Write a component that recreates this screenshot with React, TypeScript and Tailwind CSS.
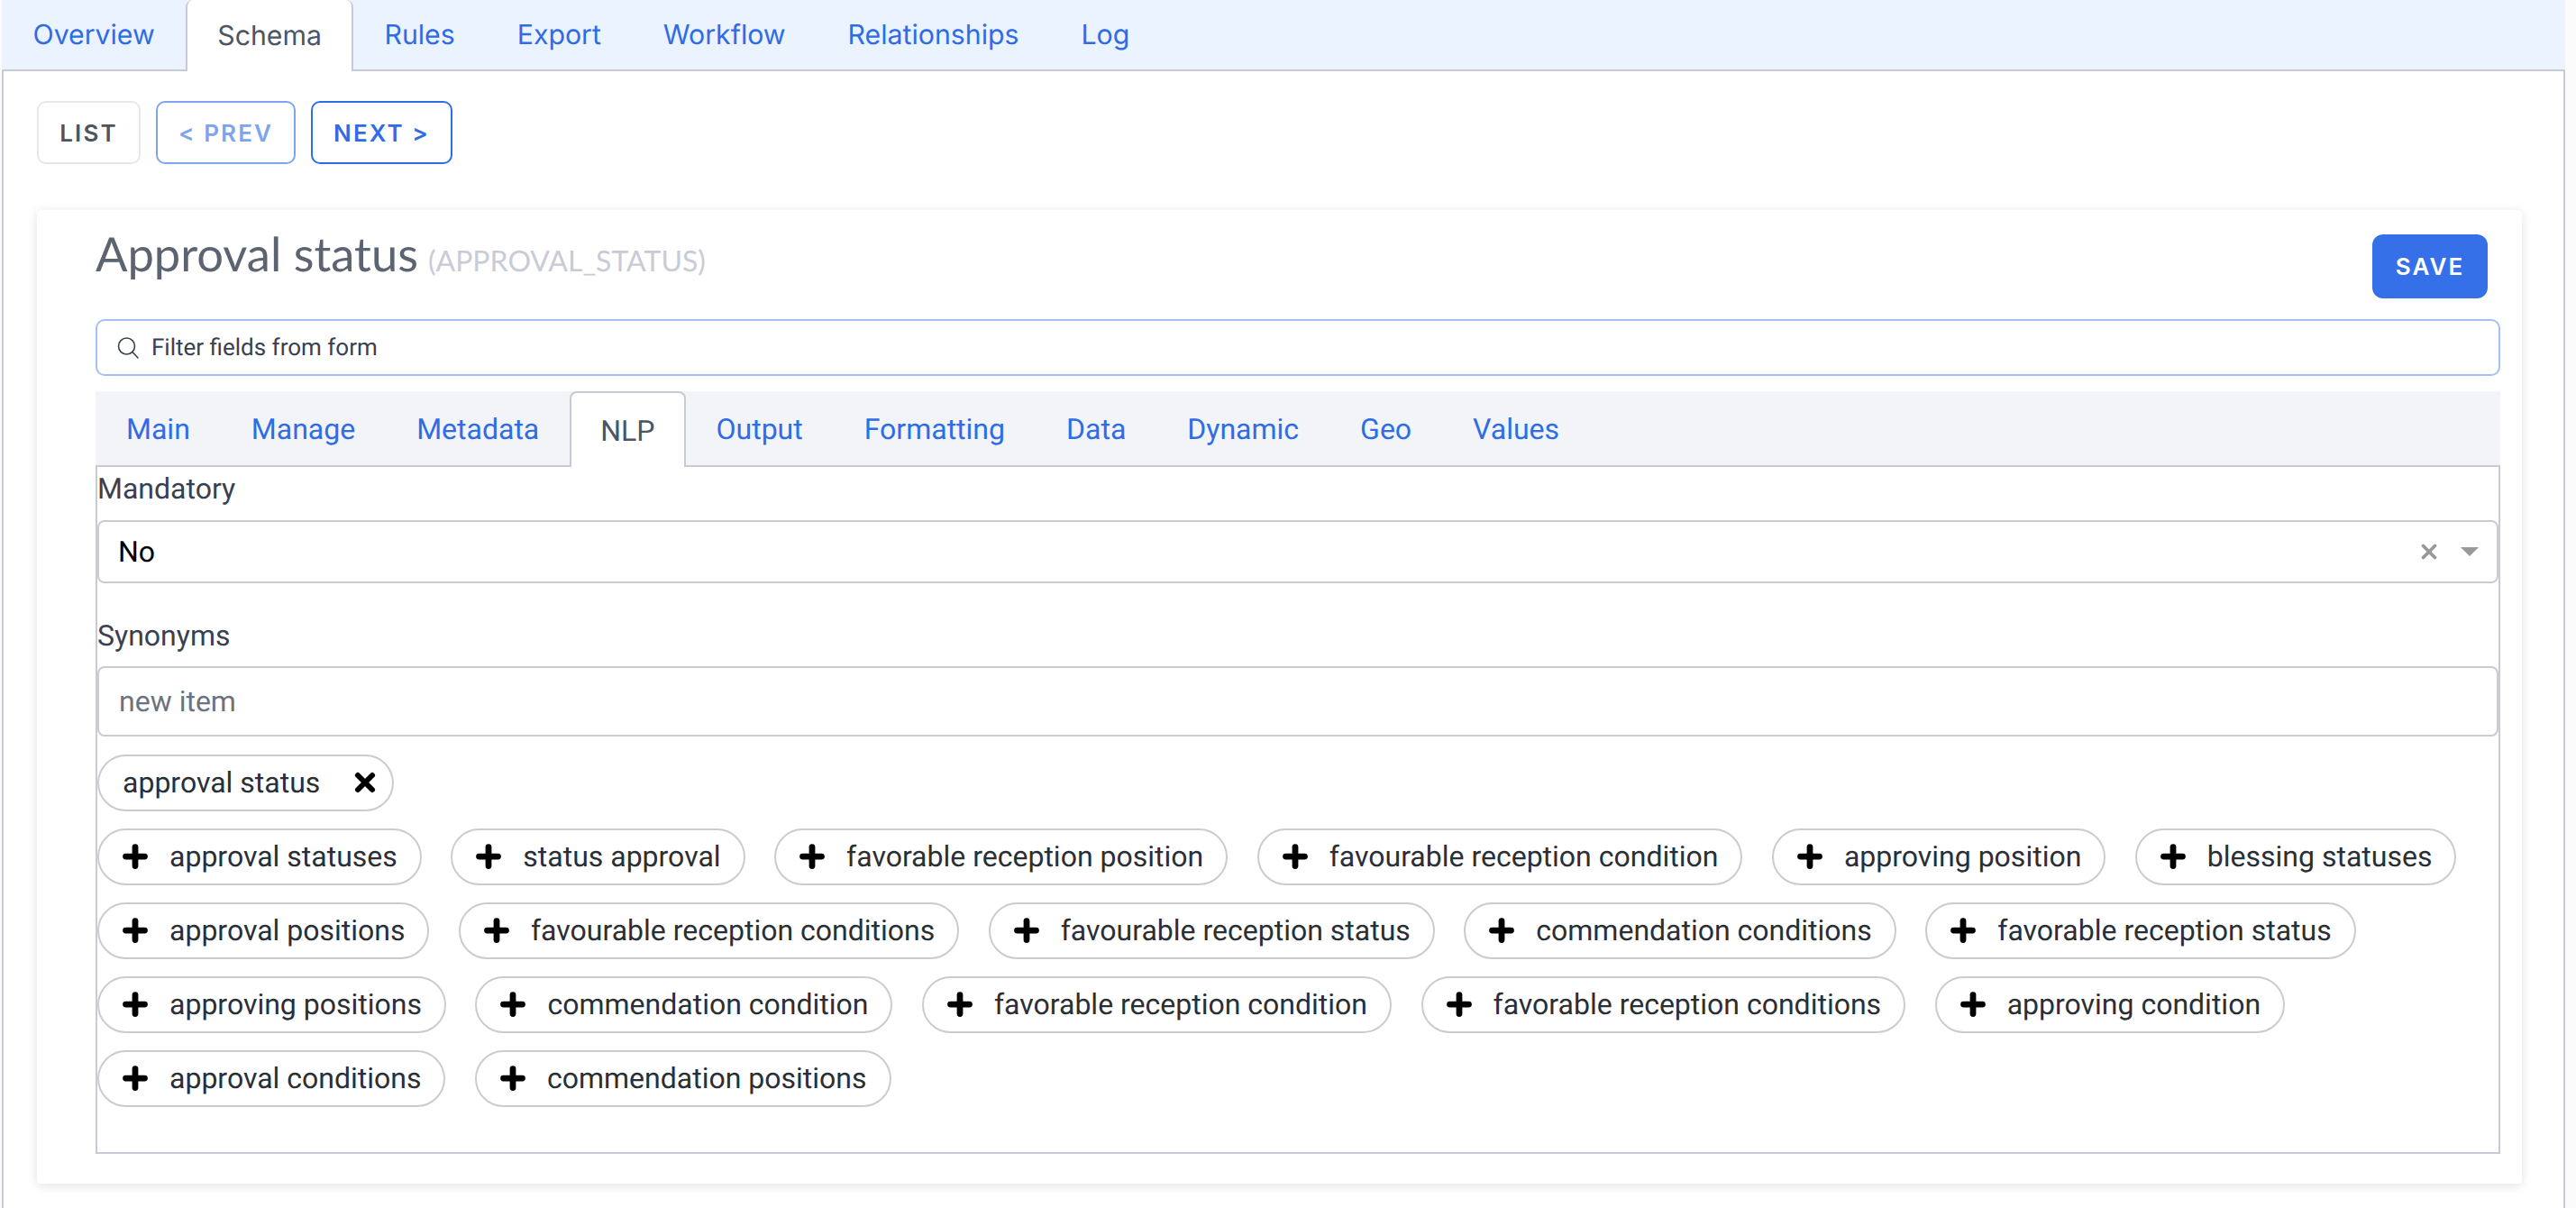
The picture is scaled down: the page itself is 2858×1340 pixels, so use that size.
import React from 'react';
import { Plus, X } from 'lucide-react';

const topTabs = ['Overview', 'Schema', 'Rules', 'Export', 'Workflow', 'Relationships', 'Log'];
const formTabs = ['Main', 'Manage', 'Metadata', 'NLP', 'Output', 'Formatting', 'Data', 'Dynamic', 'Geo', 'Values'];

const suggestions = [
  'approval statuses',
  'status approval',
  'favorable reception position',
  'favourable reception condition',
  'approving position',
  'blessing statuses',
  'approval positions',
  'favourable reception conditions',
  'favourable reception status',
  'commendation conditions',
  'favorable reception status',
  'approving positions',
  'commendation condition',
  'favorable reception condition',
  'favorable reception conditions',
  'approving condition',
  'approval conditions',
  'commendation positions',
];

const App: React.FC = () => {
  return (
    <div className="min-h-[1340px] bg-[#fbfbfb] pl-[2px]">
      <div className="w-[2844px] min-h-[1340px] border-x-2 border-[#c8cad6] bg-white font-['Roboto',sans-serif] [text-rendering:geometricPrecision]">
        {/* top tabs */}
        <div className="flex h-[79px] -mx-[2px] bg-[#ebf3fe] border-b-2 border-[#c8cad6] font-['Inter',sans-serif]">
          {topTabs.map((tab) =>
            tab === 'Schema' ? (
              <div key={tab} className="h-[79px] px-[33px] pt-[2px] bg-white border-x-2 border-[#c8cad6] rounded-t-lg flex items-center text-[30.25px] text-[#4b5563]">
                {tab}
              </div>
            ) : (
              <div key={tab} className="h-[77px] px-[34.5px] pt-[2px] flex items-center text-[30.25px] text-[#2f6ce5]">
                {tab}
              </div>
            )
          )}
        </div>

        <div className="pl-[37px] pt-[33px] flex gap-[17px] font-['Inter',sans-serif] font-semibold text-[26px] tracking-[0.08em]">
          <button className="w-[115px] h-[70px] rounded-[10px] border-2 border-[#e5e7eb] text-[#4b5563]">LIST</button>
          <button className="w-[155px] h-[70px] rounded-[10px] border-2 border-[#7fa4ef] text-[#7fa4ef]">&lt; PREV</button>
          <button className="w-[157px] h-[70px] rounded-[10px] border-2 border-[#2f6ce5] text-[#2f6ce5]">NEXT &gt;</button>
        </div>

        {/* card */}
        <div className="mt-[51px] ml-[37px] w-[2757px] h-[1080px] bg-white rounded-[4px] shadow-[0_2px_12px_rgba(0,0,0,0.12)] pl-[65px] pr-[24px]">
          <div className="flex justify-between h-[121px]">
            <div className="pt-[10px] flex items-baseline gap-[11px] font-['Lato',sans-serif] h-fit">
              <span className="text-[52.5px] text-[#5b6470]">Approval status</span>
              <span className="text-[32px] text-[#c9cbd6]">(APPROVAL_STATUS)</span>
            </div>
            <button className="mt-[27px] mr-[14px] w-[128px] h-[71px] rounded-[12px] bg-[#3570e8] text-white font-['Inter',sans-serif] font-semibold text-[26px] tracking-[0.08em]">SAVE</button>
          </div>

          <div className="h-[63px] border-2 border-[#a3c1f3] rounded-[10px] flex items-center pl-[22px] gap-[14px]">
            <svg width="24" height="24" viewBox="0 0 24 24" fill="none" stroke="#374151" strokeWidth="1.6" strokeLinecap="round">
              <circle cx="10.5" cy="10" r="9" />
              <line x1="17" y1="16.5" x2="23" y2="23" />
            </svg>
            <span className="pt-[2px] text-[26px] text-[#374151]">Filter fields from form</span>
          </div>

          <div className="mt-[17px] h-[84px] flex bg-[#f2f4f8] border-b-2 border-[#c8cad6]">
            {formTabs.map((tab) =>
              tab === 'NLP' ? (
                <div key={tab} className="h-[84px] px-[32px] pt-[2px] bg-white border-x-2 border-t-2 border-[#c8cad6] rounded-t-lg flex items-center text-[32px] text-[#4b5563]">
                  {tab}
                </div>
              ) : (
                <div key={tab} className="h-[82px] px-[34px] pt-[2px] flex items-center text-[32px] text-[#2f6ce5]">
                  {tab}
                </div>
              )
            )}
          </div>

          <div className="h-[762px] border-x-2 border-b-2 border-[#c8cad6]">
            <div className="h-[59px] text-[32px] text-[#374151]">Mandatory</div>
            <div className="h-[70px] border-2 border-[#cccccc] rounded-[8px] flex items-center pl-[21px] pr-[20px]">
              <span className="flex-1 text-[32px] text-black">No</span>
              <X className="w-[26px] h-[26px] text-[#999999] mr-[22px]" strokeWidth={3.5} />
              <span className="w-0 h-0 border-x-[10px] border-x-transparent border-t-[10px] border-t-[#999999]" />
            </div>
            <div className="mt-[34px] h-[58px] text-[32px] text-[#374151]">Synonyms</div>
            <div className="h-[78px] border-2 border-[#cccccc] rounded-[8px] flex items-center pl-[22px] text-[32px] text-[#6b7280]">new item</div>

            <div className="mt-[20px] h-[63px] w-fit rounded-full border-2 border-[#cccccc] flex items-center pl-[26px] pr-[14px] pb-[2px] gap-[34px] text-[32px] text-[#2a2f36]">
              <span>approval status</span>
              <X className="w-[32px] h-[32px] text-black" strokeWidth={4.5} />
            </div>

            <div className="mt-[19px] flex flex-wrap gap-x-[32.5px] gap-y-[19px] pr-[20px]">
              {suggestions.map((s) => (
                <div key={s} className="h-[63px] rounded-full border-2 border-[#cccccc] flex items-center pl-[22px] pr-[25px] pb-[2px] gap-[20px] text-[32px] text-[#2a2f36]">
                  <Plus className="w-[36px] h-[36px] text-black" strokeWidth={4.5} />
                  <span>{s}</span>
                </div>
              ))}
            </div>
          </div>
        </div>
      </div>
    </div>
  );
};

export default App;
